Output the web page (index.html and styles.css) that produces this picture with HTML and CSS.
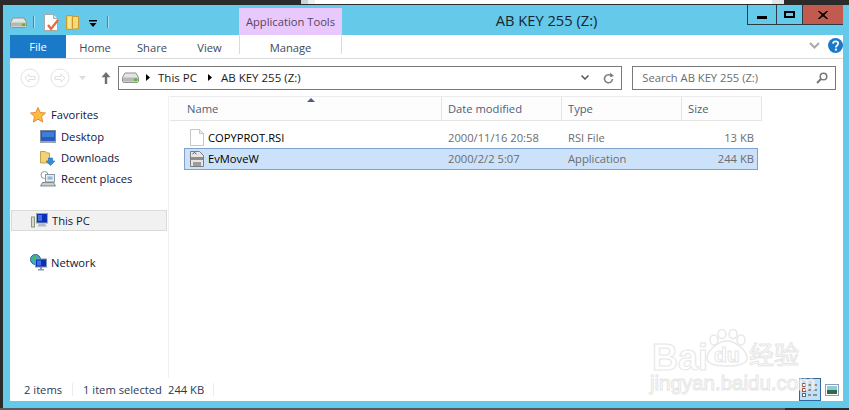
FILE: index.html
```html
<!DOCTYPE html>
<html lang="en">
<head>
<meta charset="utf-8">
<title>AB KEY 255 (Z:)</title>
<link rel="stylesheet" href="styles.css">
</head>
<body>
<div class="strip"><span class="strip-a"></span><span class="strip-b"></span><span class="strip-c"></span><span class="strip-d"></span><span class="strip-e"></span><span class="strip-f"></span></div>
<div class="window">
  <header class="titlebar">
    <div class="qat">
      <svg class="ic-drive" width="17" height="11" viewBox="0 0 17 11"><path d="M3 1h11l2.500 4.500v4l-1 1H1.500l-1-1v-4z" fill="#e4e6e6" stroke="#8e9392"/><path d="M1 5.500h15v4H1z" fill="#b4b8b7"/><rect x="12" y="6.500" width="3" height="2.500" fill="#5fb52c"/></svg>
      <span class="qat-sep"></span>
      <svg class="ic-doc" width="15" height="17" viewBox="0 0 15 17"><path d="M.500.500h9l4 4v12H.500z" fill="#fff" stroke="#a9a9a9"/><path d="M9.500.500v4h4" fill="#e8e8e8" stroke="#a9a9a9"/><path d="M4 11l3 4 7-9" fill="none" stroke="#e4683a" stroke-width="2.200"/></svg>
      <svg class="ic-folder" width="14" height="15" viewBox="0 0 14 15"><path d="M.500.500h6v14h-6z" fill="#f3cf63" stroke="#c99a2e"/><path d="M6.500 1.500h6v12l-6 1z" fill="#f6d978" stroke="#c99a2e"/><path d="M2 2h3v11H2z" fill="#fbe58c"/></svg>
      <svg class="ic-qdrop" width="8" height="7" viewBox="0 0 8 7"><path d="M0 0h8v1.500H0zM.500 3h7L4 7z" fill="#000"/></svg>
      <span class="qat-sep qat-sep-b"></span>
    </div>
    <div class="ctx-tab">Application Tools</div>
    <div class="title">AB KEY 255 (Z:)</div>
    <div class="controls">
      <div class="ctl ctl-min"><span class="glyph-min"></span></div>
      <div class="ctl ctl-max"><span class="glyph-max"></span></div>
      <div class="ctl ctl-close"><svg width="10" height="8" viewBox="0 0 10 8"><path d="M1 0l4 3 4-3h1L6 4l4 4H9L5 5 1 8H0l4-4L0 0z" fill="#000" stroke="#000" stroke-width=".6"/></svg></div>
    </div>
  </header>

  <div class="body">
    <nav class="ribbon">
      <div class="tab tab-file">File</div>
      <div class="tab tab-home">Home</div>
      <div class="tab tab-share">Share</div>
      <div class="tab tab-view">View</div>
      <div class="tab tab-manage">Manage</div>
      <div class="ribbon-right">
        <svg width="11" height="7" viewBox="0 0 11 7"><path d="M1 1l4.500 4.500L10 1" fill="none" stroke="#a9a9a9" stroke-width="2"/></svg>
        <svg class="ic-help" width="15" height="15" viewBox="0 0 15 15"><circle cx="7.500" cy="7.500" r="7.500" fill="#1b78c9"/><path d="M5 5.600c.2-3 5.200-3 5.200 0 0 2-2.300 1.800-2.300 3.800" fill="none" stroke="#fff" stroke-width="1.700"/><rect x="6.900" y="10.600" width="2" height="2" fill="#fff"/></svg>
      </div>
    </nav>

    <div class="navbar">
      <svg class="nav-btn" width="20" height="20" viewBox="0 0 20 20"><circle cx="10" cy="10" r="9" fill="#fff" stroke="#e2e2e2"/><path d="M5 10l4-4v2.500h6v3H9V14z" fill="#fff" stroke="#e0e0e0"/></svg>
      <svg class="nav-btn nav-fwd" width="20" height="20" viewBox="0 0 20 20"><circle cx="10" cy="10" r="9" fill="#fff" stroke="#e2e2e2"/><path d="M15 10l-4-4v2.500H5v3h6V14z" fill="#fff" stroke="#e0e0e0"/></svg>
      <svg class="nav-drop" width="7" height="4" viewBox="0 0 7 4"><path d="M0 0h7L3.500 4z" fill="#dcdcdc"/></svg>
      <svg class="nav-up" width="10" height="12" viewBox="0 0 10 12"><path d="M5 0l4.500 5.200H6.200V12H3.800V5.200H.5z" fill="#6f6f6f"/></svg>
      <div class="address">
        <svg class="addr-drive" width="17" height="11" viewBox="0 0 17 11"><path d="M3 1h11l2.500 4.500v4l-1 1H1.500l-1-1v-4z" fill="#e4e6e6" stroke="#8e9392"/><path d="M1 5.500h15v4H1z" fill="#b4b8b7"/><rect x="12" y="6.500" width="3" height="2.500" fill="#5fb52c"/></svg>
        <svg class="crumb-arrow" width="4" height="7" viewBox="0 0 4 7"><path d="M0 0l4 3.500L0 7z" fill="#000"/></svg>
        <span class="crumb crumb-pc">This PC</span>
        <svg class="crumb-arrow" width="4" height="7" viewBox="0 0 4 7"><path d="M0 0l4 3.500L0 7z" fill="#000"/></svg>
        <span class="crumb crumb-key">AB KEY 255 (Z:)</span>
        <svg class="addr-chev" width="8" height="5" viewBox="0 0 8 5"><path d="M.500.500L4 4 7.500.500" fill="none" stroke="#555" stroke-width="1.500"/></svg>
        <svg class="addr-refresh" width="11" height="12" viewBox="0 0 11 12"><path d="M8.800 4.500A4 4 0 1 0 9.500 7" fill="none" stroke="#7d7d7d" stroke-width="1.600"/><path d="M7 .500l.3 4.500 3.700-1z" fill="#7d7d7d"/></svg>
      </div>
      <div class="search">
        <span class="search-text">Search AB KEY 255 (Z:)</span>
        <svg width="12" height="12" viewBox="0 0 12 12"><circle cx="7.500" cy="4.500" r="3.300" fill="none" stroke="#777" stroke-width="1.500"/><path d="M5 7l-4 4" stroke="#777" stroke-width="2"/></svg>
      </div>
    </div>

    <div class="main">
      <aside class="sidebar">
        <div class="side-row side-fav">
          <svg width="16" height="16" viewBox="0 0 16 16"><path d="M8 .500l2.200 5 5.300.500-4 3.600 1.200 5.400L8 12.200 3.300 15l1.200-5.400-4-3.600 5.300-.500z" fill="#fbbd3d" stroke="#e8873c"/></svg>
          <span>Favorites</span>
        </div>
        <div class="side-row side-sub">
          <svg width="16" height="13" viewBox="0 0 16 13"><rect x=".5" y=".5" width="15" height="11" fill="#2a5cb8" stroke="#7c8a99"/><rect x="2" y="2" width="12" height="5" fill="#3f7ed8"/><rect x="0" y="11" width="16" height="2" fill="#9aa5af"/></svg>
          <span>Desktop</span>
        </div>
        <div class="side-row side-sub">
          <svg width="16" height="16" viewBox="0 0 16 16"><path d="M.500 1.500h5l1 1.500h3v10h-9z" fill="#f2d378" stroke="#c9a04a"/><path d="M8.500 8h4v3H15l-4.500 4.500L6 11h2.500z" fill="#2b8fe0" stroke="#1c6cb8" stroke-width=".6"/></svg>
          <span>Downloads</span>
        </div>
        <div class="side-row side-sub">
          <svg width="16" height="16" viewBox="0 0 16 16"><circle cx="4.500" cy="4" r="3.500" fill="#fff" stroke="#8d9ca0"/><rect x="5.500" y="3.500" width="9" height="7.500" fill="#e6edf2" stroke="#8a979e"/><rect x="7.500" y="5.500" width="5" height="3" fill="#8fb6d8"/><path d="M2.500 11.500h11l2 3.500h-15z" fill="#c9cdcf" stroke="#80878b"/></svg>
          <span>Recent places</span>
        </div>
        <div class="side-row side-pc">
          <svg width="17" height="15" viewBox="0 0 17 15"><rect x=".5" y="4" width="3" height="10" fill="#d5dcc8" stroke="#8b9484"/><rect x="5.500" y=".5" width="11" height="9.500" fill="#0c2fb8" stroke="#98a3ac"/><path d="M7 2h4v6H7z" fill="#3c72e0"/><path d="M8 10.500h6l1.500 3h-9z" fill="#b4bcc3"/></svg>
          <span>This PC</span>
        </div>
        <div class="side-row side-net">
          <svg width="17" height="17" viewBox="0 0 17 17"><circle cx="5.500" cy="5.500" r="5" fill="#3fa8cf" stroke="#20708d"/><path d="M2 3l3-1 2 2-3 3z" fill="#55b848"/><rect x="5.500" y="5" width="11" height="8" fill="#0c2fb8" stroke="#7f93ad"/><rect x="7" y="6.500" width="4" height="5" fill="#3c72e0"/><path d="M10 13h2v2h2v1.500H8V15h2z" fill="#8d98a3"/></svg>
          <span>Network</span>
        </div>
      </aside>

      <section class="files">
        <div class="cols">
          <div class="col col-name">Name<svg class="sort" width="8" height="4" viewBox="0 0 8 4"><path d="M4 0l4 4H0z" fill="#4c607a"/></svg></div>
          <div class="col col-date">Date modified</div>
          <div class="col col-type">Type</div>
          <div class="col col-size">Size</div>
        </div>
        <div class="rows">
          <div class="row">
            <div class="cell cell-name">
              <svg width="14" height="17" viewBox="0 0 14 17"><path d="M.500.500h9l4 4v12H.500z" fill="#fff" stroke="#c6c6c6"/><path d="M9.500.500v4h4z" fill="#f0f0f0" stroke="#c6c6c6"/></svg>
              <span>COPYPROT.RSI</span>
            </div>
            <div class="cell cell-date">2000/11/16 20:58</div>
            <div class="cell cell-type">RSI File</div>
            <div class="cell cell-size">13 KB</div>
          </div>
          <div class="row row-sel">
            <div class="cell cell-name">
              <svg width="14" height="16" viewBox="0 0 14 16"><path d="M.500.500h9l4 4v11H.500z" fill="#e6e6e6" stroke="#7d7d7d"/><path d="M1 6h12v3H1z" fill="#8e8e8e"/><path d="M2.500 3l2-1.500 2 1.500M3 12h8M3 14h8" fill="none" stroke="#555"/></svg>
              <span>EvMoveW</span>
            </div>
            <div class="cell cell-date">2000/2/2 5:07</div>
            <div class="cell cell-type">Application</div>
            <div class="cell cell-size">244 KB</div>
          </div>
        </div>
      </section>
    </div>

    <footer class="status">
      <span class="st-count">2 items</span>
      <span class="st-sep"></span>
      <span class="st-sel">1 item selected</span>
      <span class="st-size">244 KB</span>
      <span class="st-sep st-sep-b"></span>
      <div class="views">
        <div class="view-btn">
          <svg width="16" height="14" viewBox="0 0 16 14"><rect x=".5" y=".5" width="3" height="3" fill="#fff" stroke="#666"/><rect x=".5" y="5.500" width="3" height="3" fill="#fff" stroke="#b8442f"/><rect x=".5" y="10.500" width="3" height="3" fill="#fff" stroke="#666"/><path d="M6 2h3M11 2h4M6 7h3M11 7h4M6 12h3M11 12h4" stroke="#444"/></svg>
        </div>
        <svg class="view-large" width="14" height="12" viewBox="0 0 14 12"><rect x=".5" y=".5" width="13" height="11" fill="#fff" stroke="#8e9eb0"/><rect x="2" y="2" width="10" height="4" fill="#8ccbe0"/><rect x="2" y="6" width="10" height="4" fill="#2f6a43"/></svg>
      </div>
    </footer>
    <div class="watermark" aria-hidden="true">
      <span class="wm-bai">Bai</span>
      <svg class="wm-paw" width="44" height="38" viewBox="0 0 44 38"><g fill="#fff" stroke="#e8e8e8" stroke-width="1.500"><ellipse cx="9" cy="11" rx="4" ry="5"/><ellipse cx="17" cy="5" rx="4" ry="4.500"/><ellipse cx="28" cy="5" rx="4" ry="4.500"/><ellipse cx="36" cy="11" rx="4" ry="5"/><path d="M22 12c8 0 20 9 20 17 0 6-8 8-20 8S2 35 2 29c0-8 12-17 20-17z"/></g></svg>
      <span class="wm-du">du</span>
      <span class="wm-cn">经验</span>
      <span class="wm-url">jingyan.baidu.com</span>
    </div>
  </div>
</div>
<div class="strip-bottom"><span class="strip-bl"></span></div>
</body>
</html>
```
FILE: styles.css
```css
* { box-sizing: border-box; }
html, body { margin: 0; padding: 0; }
body {
  width: 849px;
  height: 410px;
  overflow: hidden;
  background: #2b2b2b;
  font: 12px/16px "Open Sans", "Noto Sans", sans-serif;
  color: #000;
}
svg { display: block; flex: none; }

.strip { display: flex; height: 4px; }
.strip span { display: block; }
.strip-a { width: 301px; }
.strip-b { width: 7px; background: #c5d6dc; }
.strip-c { width: 7px; background: #eef0f0; }
.strip-d { width: 457px; background: #fff; }
.strip-e { width: 12px; background: #dfe6e8; }
.strip-f { flex: 1; }

.window {
  margin-left: 3px;
  height: 404px;
  border-top: 1px solid #2b2b2b;
  background: #65c9ea;
  padding: 0 6px 7px 7px;
  display: flex;
  flex-direction: column;
}

.titlebar { display: flex; height: 30px; flex: none; }
.qat { width: 229px; display: flex; align-items: center; padding-top: 4px; }
.qat-sep { width: 1px; height: 12px; background: #3d8cac; margin: 0 10px 0 6px; box-shadow: 1px 0 0 #a8e0f3; }
.ic-folder { margin-left: 7px; }
.ic-qdrop { margin-left: 9px; margin-top: 2px; }
.qat-sep-b { margin-left: 10px; }
.ctx-tab {
  width: 103px;
  height: 27px;
  margin-top: 3px;
  background: #e9c8fd;
  color: #55465f;
  text-align: center;
  font-size: 11.2px;
  line-height: 28px;
}
.title {
  flex: 1;
  text-align: center;
  font-size: 14.7px;
  line-height: 30px;
  color: #17252c;
  padding-left: 4px;
}
.controls { display: flex; height: 20px; }
.ctl {
  display: flex;
  align-items: center;
  justify-content: center;
  border: 1px solid #2a3b44;
  border-top: 0;
  border-left-width: 1px;
}
.ctl-min { width: 29px; border-right: 0; padding-top: 3px; }
.ctl-max { width: 26px; border-right: 0; }
.ctl-close { width: 41px; background: #c15b50; border-right: 0; border-color: #2a3b44; }
.glyph-min { width: 10px; height: 3px; background: #000; margin-top: 3px; }
.glyph-max { width: 11px; height: 7px; border: 2px solid #000; }

.body {
  position: relative;
  flex: 1;
  background: #fff;
  display: flex;
  flex-direction: column;
  min-height: 0;
}

.ribbon {
  display: flex;
  height: 24px;
  flex: none;
  border-bottom: 1px solid #dadbdc;
}
.tab { height: 23px; line-height: 25px; text-align: center; font-size: 11.2px; color: #3c4a5c; }
.tab-file { width: 56px; background: #1a79c9; color: #fff; font-size: 11.2px; line-height: 24px; }
.tab-home { width: 58px; }
.tab-share { width: 56px; }
.tab-view { width: 59px; }
.tab-manage { width: 103px; border-left: 1px solid #dadbdc; border-right: 1px solid #dadbdc; height: 19px; margin-bottom: 4px; line-height: 25px; overflow: visible; }
.ribbon-right { margin-left: auto; margin-top: -2px; display: flex; align-items: center; gap: 8px; }

.navbar {
  height: 37px;
  flex: none;
  display: flex;
  align-items: center;
  padding: 0 7px 0 10px;
}
.nav-fwd { margin-left: 10px; }
.nav-drop { margin-left: 9px; }
.nav-up { margin-left: 15px; }
.address {
  width: 505px;
  height: 24px;
  margin-left: 7px;
  border: 1px solid #7a7a7a;
  display: flex;
  align-items: center;
  padding-left: 3px;
  font-size: 11.5px;
}
.crumb-arrow { margin-left: 7px; }
.crumb { color: #1c1c1c; }
.crumb-pc { margin-left: 8px; width: 43px; white-space: nowrap; }
.crumb-key { margin-left: 9px; white-space: nowrap; }
.addr-chev { margin-left: auto; }
.addr-refresh { margin-left: 14px; margin-right: 7px; }
.search {
  width: 204px;
  height: 24px;
  margin-left: 10px;
  border: 1px solid #7a7a7a;
  display: flex;
  align-items: center;
  justify-content: space-between;
  padding: 0 7px 0 9px;
  color: #6d6d6d;
  font-size: 11.2px;
}

.main { flex: 1; display: flex; min-height: 0; }
.sidebar {
  width: 159px;
  flex: none;
  border-right: 1px solid #f0f0f0;
  padding-top: 8px;
  display: flex;
  flex-direction: column;
  font-size: 11.2px;
}
.side-row { display: flex; align-items: center; height: 21px; color: #14143c; }
.side-fav { padding-left: 20px; gap: 5px; }
.side-fav + .side-sub { margin-top: 1px; }
.side-sub { padding-left: 30px; gap: 5px; }
.side-pc {
  margin: 21px 1px 0;
  height: 21px;
  padding-left: 19px;
  gap: 4px;
  background: #f1f1f1;
  border: 1px solid #dadada;
}
.side-net { margin-top: 21px; padding-left: 20px; gap: 4px; }

.files { flex: 1; min-width: 0; }
.cols {
  width: 592px;
  height: 25px;
  margin-left: 1px;
  display: flex;
  border-top: 1px solid #ececec;
  border-bottom: 1px solid #e5e5e5;
  color: #4c607a;
  font-size: 11.2px;
  line-height: 23px;
  background: #fdfdfd;
}
.col { padding-left: 6px; border-right: 1px solid #e5e5e5; position: relative; }
.col-name { width: 272px; padding-left: 17px; }
.col-date { width: 120px; }
.col-type { width: 120px; }
.col-size { width: 80px; border-right: 1px solid #e5e5e5; }
.sort { position: absolute; left: 137px; top: 1px; }

.rows { margin: 6px 0 0 15px; width: 574px; }
.row { display: flex; height: 21px; align-items: center; font-size: 11.2px; border: 1px solid transparent; }
.row-sel { height: 22px; background: #cce2fa; border-color: #7da2ce; }
.cell { color: #6d6d6d; }
.cell-name { width: 263px; display: flex; align-items: center; gap: 4px; padding-left: 5px; color: #000; }
.cell-date { width: 120px; }
.cell-type { width: 120px; }
.cell-size { width: 69px; text-align: right; padding-right: 3px; }

.status {
  height: 23px;
  flex: none;
  display: flex;
  align-items: center;
  color: #2b3a55;
  font-size: 11.2px;
  padding-left: 14px;
}
.st-count { width: 48px; }
.st-sep { width: 1px; height: 13px; background: #ececec; margin-right: 10px; }
.st-sel { width: 85px; }
.st-size { width: 45px; }
.st-sep-b { margin-right: 0; }
.views { margin-left: auto; display: flex; align-items: center; gap: 4px; padding-right: 4px; }
.view-btn {
  width: 22px;
  height: 23px;
  background: #bfe0f6;
  border: 1px solid #2f6a9e;
  display: flex;
  align-items: center;
  justify-content: center;
}

.watermark { position: absolute; left: 641px; top: 294px; width: 160px; height: 64px; color: #fff; -webkit-text-stroke: 1px #e6e6e6; }
.watermark span { position: absolute; white-space: nowrap; font-family: "Liberation Sans", sans-serif; }
.wm-bai { left: 1px; top: 14px; font-size: 36px; line-height: 30px; font-weight: 700; }
.wm-paw { position: absolute; left: 54px; top: 0; }
.wm-du { left: 63px; top: 15px; font-size: 21px; line-height: 22px; font-weight: 700; }
.wm-cn { left: 98px; top: 10px; font-size: 25px; line-height: 28px; font-family: "Noto Sans CJK SC", sans-serif !important; }
.wm-url { left: -1px; top: 45px; font-size: 20.5px; line-height: 18px; }

.strip-bottom { height: 2px; margin-top: 0; background: #2b2b2b; }
.strip-bl { display: block; width: 785px; height: 2px; background: #5a5a5a; }
```
